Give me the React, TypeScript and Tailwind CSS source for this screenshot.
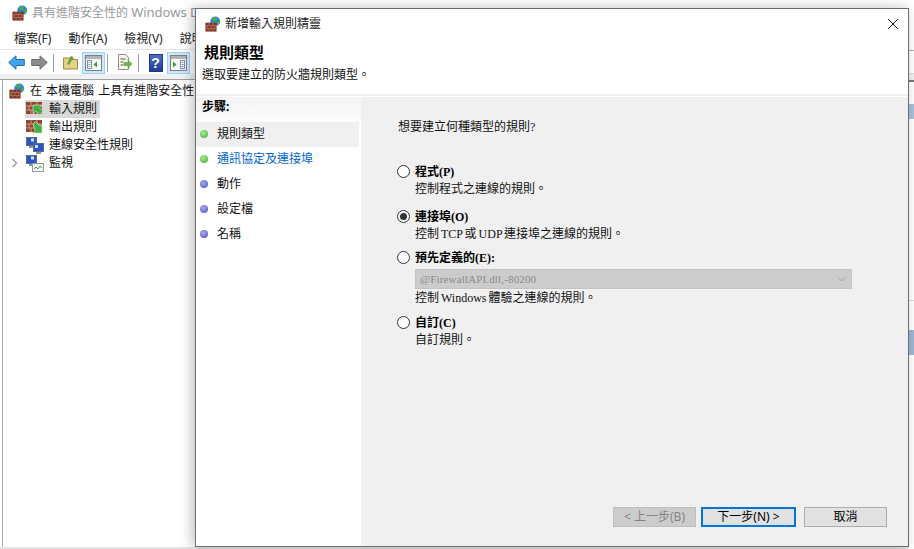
import React from "react";

const sans = "font-['Segoe_UI','Noto_Sans','Noto_Sans_CJK_TC',sans-serif]";
const ming = "font-['Liberation_Serif','Noto_Sans_CJK_TC',serif]";

function Firewall({ size = 16 }: { size?: number }) {
  return (
    <svg width={size} height={size} viewBox="0 0 18 18" className="shrink-0">
      <circle cx="11.5" cy="6" r="5.5" fill="#2f86d2" />
      <path d="M8 2.500c2-1.500 4-1.200 5.500 0L12 5.500 8.500 5zM13.500 7.500l2.500-3 .8 2.500-2 3z" fill="#4fae3e" />
      <rect x="0.500" y="7.500" width="12.500" height="10" fill="#7f3527" />
      <path d="M.5 10.800h12.500M.5 14.200h12.500M4.500 7.500v3.300M9 7.500v3.300M2.500 10.800v3.400M7 10.800v3.400M11 10.800v3.400M4.500 14.200v3.300M9 14.200v3.300" stroke="#b97a62" strokeWidth="0.900" fill="none" />
    </svg>
  );
}

function RuleIcon({ out }: { out?: boolean }) {
  return (
    <svg width="18" height="16" viewBox="0 0 18 16" className="shrink-0">
      <rect x="0" y="1" width="16" height="12" fill="#94432f" />
      <path d="M0 5h16M0 9h16M5 1v4M11 1v4M3 5v4M8 5v4M13 5v4M5 9v4M11 9v4" stroke="#cf9a85" strokeWidth="1" fill="none" />
      {out ? (
        <path d="M7 5l2.500-2.500L14 7l2-2v9H7l2.200-2.200z" fill="#43ad47" stroke="#cdeec8" strokeWidth=".7" />
      ) : (
        <path d="M7 4h9l-2.300 2.300L17 10l-3.500 4-3.600-3.800L7 13z" fill="#43ad47" stroke="#cdeec8" strokeWidth=".7" />
      )}
    </svg>
  );
}

function Monitor({ chart }: { chart?: boolean }) {
  return (
    <svg width="18" height="17" viewBox="0 0 18 17" className="shrink-0">
      <rect x="0.500" y="0.500" width="10" height="8" fill="#2a55c8" stroke="#5a6a80" />
      <rect x="5" y="1.500" width="3" height="3" fill="#cfe3fb" />
      <path d="M3 9h5v2H3z" fill="#8a93a0" />
      {chart ? (
        <g>
          <rect x="6.500" y="8.500" width="11" height="8" fill="#f4f4f4" stroke="#9a9a9a" />
          <path d="M8 14l2-2 2 2 2-3 2 2" stroke="#3aa53a" fill="none" />
        </g>
      ) : (
        <g>
          <rect x="7.500" y="6.500" width="10" height="8" fill="#2a55c8" stroke="#5a6a80" />
          <rect x="9" y="8" width="3" height="3" fill="#cfe3fb" />
          <path d="M10 15h5v2h-5z" fill="#8a93a0" />
        </g>
      )}
    </svg>
  );
}

function Arrow({ left, color, stroke }: { left?: boolean; color: string; stroke: string }) {
  return (
    <svg width="17" height="15" viewBox="0 0 17 15" className="shrink-0">
      <path d={left ? "M.7 7.500L8 .8V4.500h8.300v6H8v3.700z" : "M16.300 7.500L9 .8V4.500H.7v6H9v3.700z"} fill={color} stroke={stroke} />
    </svg>
  );
}

function Pane({ side }: { side: "l" | "r" }) {
  return (
    <svg width="17" height="16" viewBox="0 0 17 16">
      <rect x="0.500" y="0.500" width="16" height="15" fill="#f6f6f6" stroke="#808080" />
      <rect x="1" y="1" width="15" height="3" fill="#b4b4b4" />
      {side === "l" ? (
        <>
          <rect x="2.500" y="5.500" width="4" height="8" fill="#fff" stroke="#7a93b0" />
          <path d="M3.500 7.500h2M3.500 9.500h2M3.500 11.500h2" stroke="#7a93b0" />
          <path d="M12 6.500v6L8.500 9.500z" fill="#35a035" />
        </>
      ) : (
        <>
          <rect x="10.500" y="5.500" width="4" height="8" fill="#fff" stroke="#7a93b0" />
          <path d="M11.500 7.500h2M11.500 9.500h2M11.500 11.500h2" stroke="#7a93b0" />
          <path d="M3 6.500v6l3.500-3z" fill="#35a035" />
        </>
      )}
    </svg>
  );
}

function ToolButton({ active, children }: { active?: boolean; children: React.ReactNode }) {
  return (
    <div className={`w-[23px] h-[22px] flex items-center justify-center border ${active ? "bg-[#cce8ff] border-[#99d1ff]" : "border-transparent"}`}>
      {children}
    </div>
  );
}

function Sep() {
  return <div className="w-px h-[18px] bg-[#a0a0a0] ml-[2px] mr-[5px]" />;
}

function TreeRow({ icon, label, selected, chevron }: { icon: React.ReactNode; label: string; selected?: boolean; chevron?: boolean }) {
  return (
    <div className="flex items-center h-[18px] pl-[5px]">
      <div className="w-4 flex justify-center pr-[4px]">
        {chevron && (
          <svg width="8" height="10" viewBox="0 0 8 10"><path d="M1.500 1l4 4-4 4" fill="none" stroke="#9a9a9a" strokeWidth="1.300" /></svg>
        )}
      </div>
      <div className={`flex items-center gap-[5px] h-[18px] w-[75px] ${selected ? "bg-[#d9d9d9]" : ""}`}>
        <div className="w-[18px] ml-px flex justify-center">{icon}</div>
        <span className="text-[12px] whitespace-nowrap text-[#111]">{label}</span>
      </div>
    </div>
  );
}

function BackgroundWindow() {
  return (
    <div className={`${sans} w-full h-full bg-white flex flex-col`}>
      <div className="h-[25px] bg-white flex items-center pl-[12px] gap-[4px] pt-px">
        <Firewall />
        <span className="text-[12px] text-[#9a9a9a] whitespace-nowrap">具有進階安全性的 <span className="text-[13px]">Windows D</span></span>
      </div>
      <div className="h-[25px] bg-white flex items-center pl-[14px] pt-[3px] gap-[17px] text-[12px] text-[#222] whitespace-nowrap border-b border-[#e6e6e6]">
        <span>檔案(F)</span>
        <span>動作(A)</span>
        <span>檢視(V)</span>
        <span>說明</span>
      </div>
      <div className="h-[24px] bg-white flex items-center pl-[5px] pt-px">
        <ToolButton><Arrow left color="#43a3ee" stroke="#1d6fb8" /></ToolButton>
        <ToolButton><Arrow color="#8d8d8d" stroke="#6e6e6e" /></ToolButton>
        <Sep />
        <ToolButton>
          <svg width="15" height="15" viewBox="0 0 15 15">
            <path d="M.5 3h5l1 1.500h8V14H.5z" fill="#e8cf86" stroke="#a68b3e" />
            <path d="M4 9l3-6h-2l4-2 2 3H9.500L6 10z" fill="#56a63c" />
          </svg>
        </ToolButton>
        <ToolButton active><Pane side="l" /></ToolButton>
        <Sep />
        <ToolButton>
          <svg width="17" height="17" viewBox="0 0 17 17">
            <path d="M2.500.5h7l3 3v12h-10z" fill="#fbf7e8" stroke="#8e8e8e" />
            <path d="M4.500 5h5M4.500 8h3M4.500 11h3" stroke="#555" />
            <path d="M8 8.500h4V6l4 4-4 4v-2.500H8z" fill="#6fb84a" stroke="#4d8f30" strokeWidth=".5" />
          </svg>
        </ToolButton>
        <Sep />
        <ToolButton>
          <div className="w-[14px] h-[18px] bg-linear-to-b from-[#4a6cc8] to-[#233f96] border border-[#1f3684] text-white text-[14px] font-bold leading-[16px] text-center font-['Liberation_Sans',sans-serif]">?</div>
        </ToolButton>
        <ToolButton active><Pane side="r" /></ToolButton>
      </div>
      <div className="h-[6px] bg-[#f0f0f0] border-b border-[#a0a0a0]" />
      <div className="flex-1 flex bg-white pl-[2px] min-h-0">
        <div className="w-[192px] border-l border-[#a8a8a8] pl-px pt-[1px] overflow-hidden bg-white">
          <div className="flex items-center h-[19px] pl-[5px] gap-[5px] whitespace-nowrap text-[12px] text-[#111] [word-spacing:1px]">
            <Firewall />
            <span>在 本機電腦 上具有進階安全性</span>
          </div>
          <TreeRow selected icon={<RuleIcon />} label="輸入規則" />
          <TreeRow icon={<RuleIcon out />} label="輸出規則" />
          <TreeRow icon={<Monitor />} label="連線安全性規則" />
          <TreeRow chevron icon={<Monitor chart />} label="監視" />
        </div>
      </div>
      <div className="h-[2px] bg-[#e4e4e4]" />
    </div>
  );
}

function RightSliver() {
  return (
    <div className="absolute right-0 top-0 w-[5px] h-full flex flex-col bg-white">
      <div className="h-[50px]" />
      <div className="h-px bg-[#b0b0b0]" />
      <div className="h-[22px]" />
      <div className="h-px bg-[#dcdcdc]" />
      <div className="h-[6px] bg-[#f0f0f0]" />
      <div className="h-[2px] bg-[#777777]" />
      <div className="h-[22px]" />
      <div className="h-[15px] bg-[#a9c0dc]" />
      <div className="h-[181px]" />
      <div className="h-px bg-[#dcdcdc]" />
      <div className="h-[29px]" />
      <div className="h-[25px] bg-[#9fb6d4]" />
    </div>
  );
}

function StepRow({ label, done, active, link }: { label: string; done?: boolean; active?: boolean; link?: boolean }) {
  return (
    <div className={`h-[25px] flex items-center pl-[4px] pb-[2px] mr-[2px] ${active ? "bg-[#f0f0f0]" : ""}`}>
      <div className={`w-[8px] h-[8px] rounded-full ${done ? "bg-[radial-gradient(circle_at_40%_35%,#a5e890,#3fb33a)]" : "bg-[radial-gradient(circle_at_40%_35%,#a9a9ee,#4f4fbd)]"}`} />
      <span className={`ml-[9px] text-[12px] whitespace-nowrap ${link ? "text-[#0066cc]" : "text-[#111]"}`}>{label}</span>
    </div>
  );
}

function Radio({ checked }: { checked?: boolean }) {
  return (
    <div className="w-[13px] h-[13px] rounded-full border border-[#333] bg-white flex items-center justify-center shrink-0">
      {checked && <div className="w-[7px] h-[7px] rounded-full bg-[#333]" />}
    </div>
  );
}

function Option({ label, desc, checked, children, className }: { label: string; desc: string; checked?: boolean; children?: React.ReactNode; className?: string }) {
  return (
    <div className={className}>
      <div className="flex items-center h-[15px] gap-[5px]">
        <Radio checked={checked} />
        <span className="text-[12px] font-bold text-black whitespace-nowrap leading-none">{label}</span>
      </div>
      <div className="pl-[18px]">
        {children}
        <div className="text-[12px] leading-[15px] mt-[3px] text-[#111] whitespace-nowrap [word-spacing:-1px]">{desc}</div>
      </div>
    </div>
  );
}

function Btn({ children, disabled, primary, className }: { children: React.ReactNode; disabled?: boolean; primary?: boolean; className?: string }) {
  return (
    <div className={`h-[20px] flex items-center justify-center text-[12px] whitespace-nowrap ${sans} ${
      disabled ? "bg-[#cccccc] border border-[#bfbfbf] text-[#838383]" : primary ? "bg-[#e1e1e1] border-2 border-[#0078d7] text-black" : "bg-[#e1e1e1] border border-[#adadad] text-black"
    } ${className ?? ""}`}>
      {children}
    </div>
  );
}

function Wizard() {
  return (
    <div className="absolute left-[195px] top-[8px] w-[714px] h-[539px] bg-white border border-[#6e6e6e] flex flex-col shadow-[-3px_0_12px_rgba(0,0,0,0.25)]">
      <div className={`h-[29px] flex items-center pl-[9px] gap-[4px] pt-px shrink-0 ${sans}`}>
        <Firewall />
        <span className="text-[12px] text-[#222] whitespace-nowrap">新增輸入規則精靈</span>
        <svg width="10" height="10" viewBox="0 0 10 10" className="ml-auto mr-[10px]"><path d="M.3.3l9.400 9.400M9.700.3L.3 9.700" stroke="#111" strokeWidth="1" /></svg>
      </div>
      <div className="h-[58px] shrink-0 pl-[8px] border-b-2 border-[#f0f0f0]">
        <div className={`${sans} text-[15px] font-bold leading-[20px] mt-[4px] text-black`}>規則類型</div>
        <div className={`${sans} text-[12px] leading-[16px] mt-[5px] -ml-[2px] text-[#111]`}>選取要建立的防火牆規則類型。</div>
      </div>
      <div className="flex-1 flex min-h-0 pt-px">
        <div className={`w-[167px] shrink-0 border-r-2 border-[#f0f0f0] ${sans}`}>
          <div className="h-[25px] pl-[6px] pb-[6px] flex items-center text-[12px] font-bold text-black bg-linear-to-b from-[#f4f4f4] to-[#fcfcfc]">步驟:</div>
          <StepRow label="規則類型" done active />
          <StepRow label="通訊協定及連接埠" done link />
          <StepRow label="動作" />
          <StepRow label="設定檔" />
          <StepRow label="名稱" />
        </div>
        <div className="flex-1 bg-[#f0f0f0] pl-[34px] pr-[21px] flex flex-col min-w-0">
          <div className={`text-[12px] leading-[15px] mt-[23px] ml-px text-[#111] ${ming}`}>想要建立何種類型的規則?</div>
          <div className={ming}>
            <Option className="mt-[29px]" label="程式(P)" desc="控制程式之連線的規則。" />
            <Option className="mt-[12px]" label="連接埠(O)" checked desc="控制 TCP 或 UDP 連接埠之連線的規則。" />
            <Option className="mt-[8px]" label="預先定義的(E):" desc="控制 Windows 體驗之連線的規則。">
              <div className="mt-[4px] -mb-px h-[20px] w-[437px] bg-[#cccccc] border border-[#c4c4c4] flex items-center pl-[4px] pr-[5px] justify-between">
                <span className="text-[11px] tracking-[0.15px] text-[#8a8a8a]">@FirewallAPI.dll,-80200</span>
                <svg width="9" height="6" viewBox="0 0 9 6"><path d="M.5 1l4 4 4-4" fill="none" stroke="#a0a0a0" /></svg>
              </div>
            </Option>
            <Option className="mt-[9px]" label="自訂(C)" desc="自訂規則。" />
          </div>
          <div className="mt-auto mb-[19px] flex justify-end">
            <Btn disabled className="w-[83px] mr-[5px]">&lt; 上一步(B)</Btn>
            <Btn primary className="w-[95px]">下一步(N) &gt;</Btn>
            <Btn className="w-[83px] ml-[8px]">取消</Btn>
          </div>
        </div>
      </div>
    </div>
  );
}

export default function App() {
  return (
    <div className="relative w-[914px] h-[549px] overflow-hidden bg-white">
      <BackgroundWindow />
      <RightSliver />
      <Wizard />
    </div>
  );
}
